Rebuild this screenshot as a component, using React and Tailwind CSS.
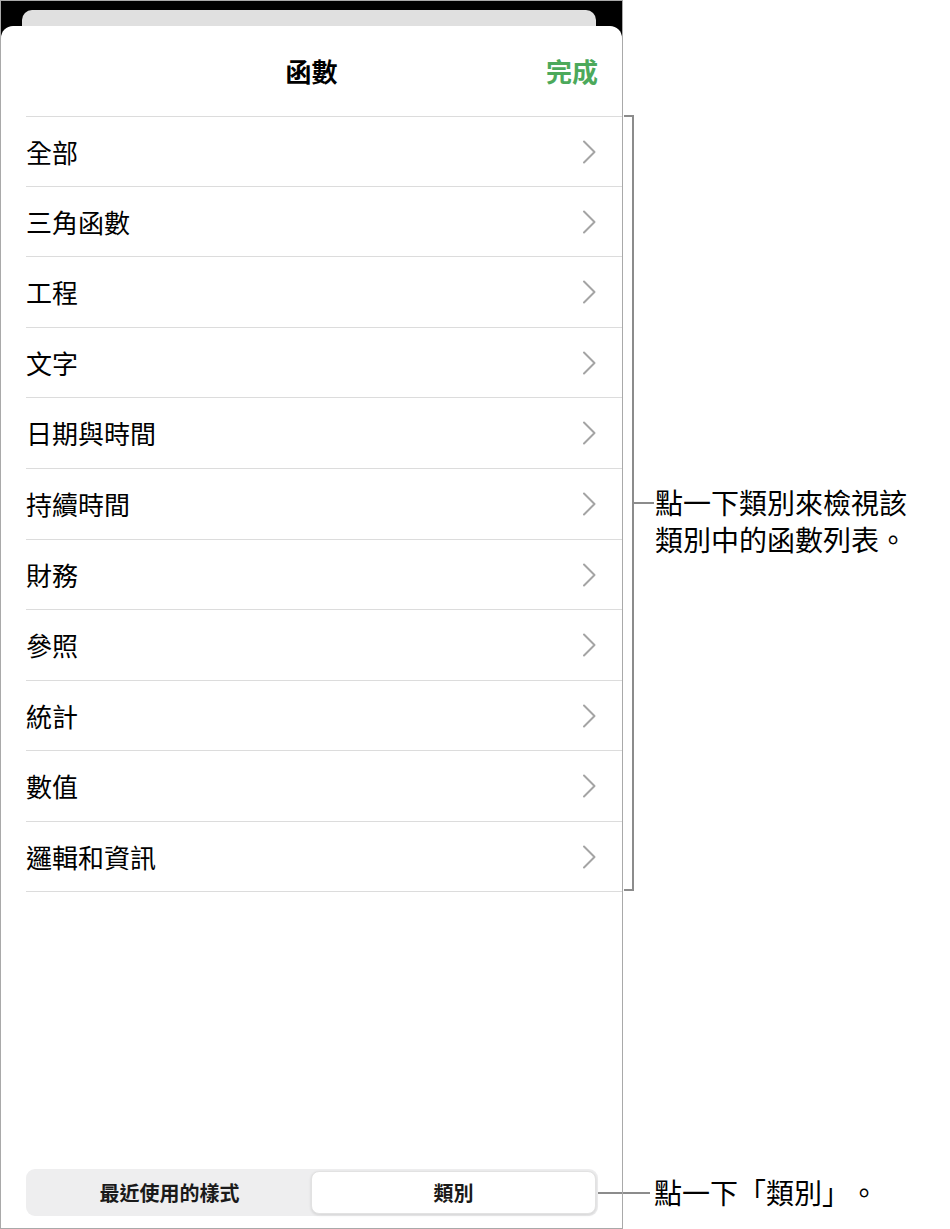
import React from "react";

const rows = [
  { label: "全部", h: "h-[70px]" },
  { label: "三角函數", h: "h-[70px]" },
  { label: "工程", h: "h-[71px]" },
  { label: "文字", h: "h-[70px]" },
  { label: "日期與時間", h: "h-[71px]" },
  { label: "持續時間", h: "h-[71px]" },
  { label: "財務", h: "h-[70px]" },
  { label: "參照", h: "h-[71px]" },
  { label: "統計", h: "h-[70px]" },
  { label: "數值", h: "h-[71px]" },
  { label: "邏輯和資訊", h: "h-[70px]" },
];

const font = "font-['Noto_Sans_CJK_TC','Noto_Sans',sans-serif]";

function Chevron() {
  return (
    <svg width="14" height="24" viewBox="0 0 14 24" fill="none">
      <polyline
        points="2,1.5 12.5,12 2,22.5"
        stroke="#a4a4a4"
        strokeWidth="2"
        strokeLinecap="round"
        strokeLinejoin="round"
      />
    </svg>
  );
}

export default function App() {
  return (
    <div className={`flex w-[950px] h-[1229px] bg-white text-black [text-spacing-trim:space-all] ${font}`}>
      {/* Left: phone sheet */}
      <div className="w-[623px] h-[1229px] bg-black border border-[#a9a9a9] flex flex-col">
        <div className="mt-[9px] ml-[21px] mr-[26px] h-[16px] rounded-t-[10px] bg-[#e0e0e0]" />
        <div className="flex-1 bg-white rounded-t-[12px] flex flex-col">
          <div className="h-[90px] grid grid-cols-[1fr_auto_1fr] items-center">
            <div />
            <div className="text-[26px] font-bold leading-none">函數</div>
            <div className="justify-self-end pr-[24px] text-[26px] font-bold leading-none text-[#4ca95b]">
              完成
            </div>
          </div>
          <div className="ml-[25px] border-t border-[#dcdcdc]">
            {rows.map((r) => (
              <div
                key={r.label}
                className={`${r.h} flex items-center justify-between pr-[26px] border-b border-[#dcdcdc]`}
              >
                <span className="text-[26px] leading-none">{r.label}</span>
                <Chevron />
              </div>
            ))}
          </div>
          <div className="flex-1" />
          <div className="flex items-center ml-[25px] mb-[12px]">
            <div className="w-[572px] h-[47px] bg-[#eeeeef] rounded-[9px] p-[2px] flex">
              <div className="flex-1 flex items-center justify-center text-[20px] font-semibold text-[#1a1a1a]">
                最近使用的樣式
              </div>
              <div className="flex-1 flex items-center justify-center text-[20px] font-semibold text-[#1a1a1a] bg-white rounded-[8px] border border-[#e2e2e2] shadow-[0_1px_3px_rgba(0,0,0,0.12)]">
                類別
              </div>
            </div>
            <div className="flex-1 h-[2px] bg-[#8c8c8c]" />
          </div>
        </div>
      </div>

      {/* Right: annotations */}
      <div className="flex-1 flex flex-col">
        <div className="mt-[115px] flex items-start">
          <div className="ml-[1px] w-[10px] h-[776px] border-t-2 border-r-2 border-b-2 border-[#8c8c8c]" />
          <div className="mt-[369px] flex items-start">
            <div className="mt-[18px] w-[20px] h-[2px] bg-[#8c8c8c]" />
            <div className="pl-[1px] text-[28px] leading-[37px]">
              點一下類別來檢視該
              <br />
              類別中的函數列表。
            </div>
          </div>
        </div>
        <div className="mt-auto mb-[18px] flex items-center">
          <div className="w-[27px] h-[2px] bg-[#8c8c8c]" />
          <div className="pl-[4px] text-[28px] leading-[37px]">點一下「類別」。</div>
        </div>
      </div>
    </div>
  );
}
